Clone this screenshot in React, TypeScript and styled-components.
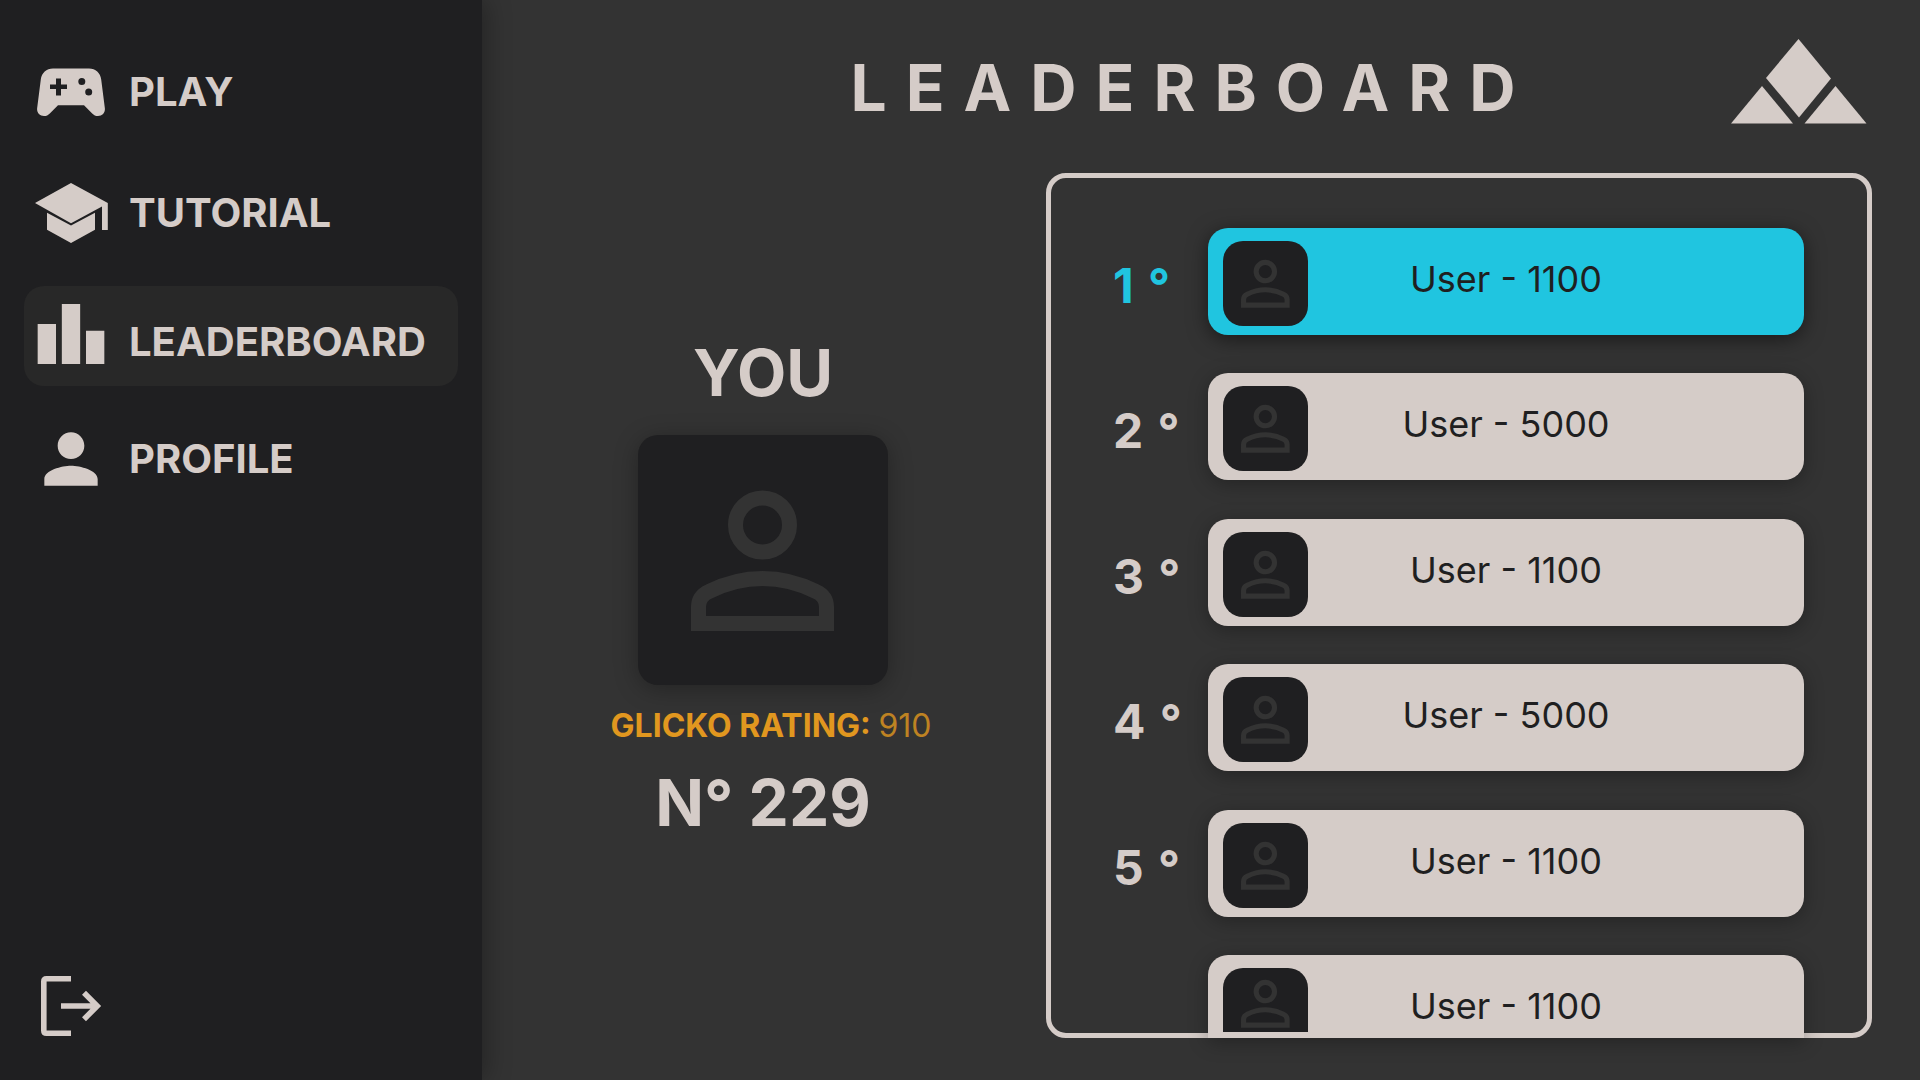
import React from "react";
import styled, { createGlobalStyle, css } from "styled-components";
import { MdLeaderboard, MdPerson } from "react-icons/md";

const color = {
  page: "#333333",
  ink: "#1f1f21",
  active: "#282828",
  sand: "#d5ccc8",
  cyan: "#20c5e0",
  amber: "#e1971f",
};

const GlobalStyle = createGlobalStyle`
  *, *::before, *::after { box-sizing: border-box; }
  body {
    margin: 0;
    background: ${color.page};
    color: ${color.sand};
    font-family: Inter, "Liberation Sans", sans-serif;
  }
  h1, h2, p, ol, ul { margin: 0; padding: 0; }
  ol, ul { list-style: none; }
`;

const Page = styled.div`
  display: grid;
  grid-template-columns: 482px minmax(0, 1fr);
  min-height: 100vh;
`;

const Sidebar = styled.aside`
  display: flex;
  flex-direction: column;
  justify-content: space-between;
  padding: 44px 24px 34px;
  background: ${color.ink};
  box-shadow: 4px 0 24px rgba(0, 0, 0, 0.3);
`;

const NavList = styled.ul`
  display: flex;
  flex-direction: column;
  gap: 25px;
`;

const NavLink = styled.a<{ $active?: boolean }>`
  display: flex;
  align-items: center;
  gap: 18px;
  height: 96px;
  padding: 0 7px;
  border-radius: 20px;
  color: ${color.sand};
  font-size: 40px;
  font-weight: 700;
  line-height: 64px;
  text-decoration: none;

  svg {
    flex: none;
    width: 80px;
    height: 80px;
  }

  ${(p) =>
    p.$active &&
    css`
      align-items: flex-end;
      height: 100px;
      padding-bottom: 12px;
      background: ${color.active};
    `}
`;

const LogoutButton = styled.button`
  align-self: flex-start;
  display: block;
  padding: 0 7px;
  border: 0;
  background: none;
  color: ${color.sand};
  cursor: pointer;

  svg {
    display: block;
    width: 80px;
    height: 80px;
  }
`;

const Main = styled.main`
  display: flex;
  flex-direction: column;
  padding-bottom: 42px;
`;

const Header = styled.header`
  display: grid;
  grid-template-columns: 1fr auto 1fr;
  align-items: end;
  padding: 39px 53px 49px 36px;
`;

const Title = styled.h1`
  grid-column: 2;
  font-size: 64px;
  font-weight: 700;
  line-height: 72px;
  letter-spacing: 19px;
`;

const Logo = styled.svg`
  justify-self: end;
  width: 136px;
  height: 85px;
  fill: ${color.sand};
`;

const Content = styled.div`
  flex: 1;
  display: grid;
  grid-template-columns: minmax(0, 564fr) minmax(0, 826fr);
  padding-right: 48px;
`;

const You = styled.section`
  display: flex;
  flex-direction: column;
  align-items: center;
  justify-content: center;
  gap: 20px;
  padding: 0 2px 36px 0;
`;

const BigText = styled.h2`
  font-size: 64px;
  font-weight: 700;
  line-height: 72px;
`;

const Portrait = styled.div`
  width: 250px;
  height: 250px;
  margin-top: 6px;
  border-radius: 20px;
  background: ${color.ink};
  box-shadow: 0 4px 24px rgba(0, 0, 0, 0.3);
`;

const Silhouette = styled.svg`
  display: block;
  width: 100%;
  aspect-ratio: 1;
  fill: none;
  stroke: ${color.page};
  stroke-width: 15;
`;

const Rating = styled.p`
  padding-left: 16px;
  color: ${color.amber};
  font-size: 32px;
  font-weight: 700;
  line-height: 42px;
  white-space: nowrap;
`;

const RatingValue = styled.span`
  font-weight: 400;
  opacity: 0.8;
`;

const Board = styled.section`
  display: flex;
  padding: 50px 63px 0 62px;
  border: 5px solid ${color.sand};
  border-radius: 20px;
`;

const Ranking = styled.ol`
  flex: 1;
  display: flex;
  flex-direction: column;
  justify-content: space-between;
  margin-bottom: -5px;
`;

const Entry = styled.li<{ $cut?: boolean }>`
  display: grid;
  grid-template-columns: 95px minmax(0, 1fr);
  height: ${(p) => (p.$cut ? "83px" : "107px")};
`;

const Rank = styled.div<{ $first?: boolean }>`
  display: flex;
  gap: 3px;
  padding-top: 8px;
  color: ${(p) => (p.$first ? color.cyan : color.sand)};
  font-size: 48px;
  font-weight: 700;
  line-height: 99px;
  white-space: pre;
`;

const Bar = styled.div<{ $first?: boolean; $cut?: boolean }>`
  grid-column: 2;
  min-height: 0;
  padding: 13px 15px 6px;
  border-radius: ${(p) => (p.$cut ? "20px 20px 0 0" : "20px")};
  background: ${(p) => (p.$first ? color.cyan : color.sand)};
  box-shadow: 0 4px 20px rgba(0, 0, 0, ${(p) => (p.$first ? 0.5 : 0.3)});
`;

const BarContent = styled.div`
  display: grid;
  grid-template-columns: 85px 1fr 85px;
  align-items: start;
  height: 100%;
  overflow: hidden;
`;

const Avatar = styled.div<{ $cut?: boolean }>`
  display: flex;
  align-items: center;
  height: 85px;
  padding-bottom: ${(p) => (p.$cut ? "13px" : "0")};
  border-radius: 20px;
  background: ${color.ink};
`;

const Player = styled.span`
  color: ${color.ink};
  font-size: 36px;
  font-weight: 400;
  line-height: 76px;
  text-align: center;
  white-space: nowrap;
`;

const PersonOutline = () => (
  <Silhouette viewBox="0 0 250 250" aria-hidden="true">
    <circle cx="124.5" cy="90" r="27" />
    <path d="M60.5 188.5V172C60.5 165 64.5 159.5 71 156.500Q97 143.500 124.500 143.500T178 156.500C184.500 159.500 188.500 165 188.500 172V188.500Z" />
  </Silhouette>
);

const GamepadIcon = () => (
  <svg viewBox="0 0 80 80" fill="currentColor" aria-hidden="true">
    <path
      fillRule="evenodd"
      d="M22 16.500H58C64.500 16.500 69.500 21 70.200 27.500L73.900 56.500C74.300 61 71 64 67 64C64.600 64 62.800 63 61.200 61.400L53 53.200H27L18.800 61.400C17.200 63 15.400 64 13 64C9 64 5.700 61 6.100 56.500L9.800 27.500C10.500 21 15.500 16.500 22 16.500ZM25 26.500V32.500H19V37H25V43.500H30V37H36V32.500H30V26.500ZM50.800 26A3.500 3.500 0 1 0 50.800 33A3.500 3.500 0 1 0 50.800 26ZM57.700 36.500A3.500 3.500 0 1 0 57.700 43.500A3.500 3.500 0 1 0 57.700 36.500Z"
    />
  </svg>
);

const SchoolIcon = () => (
  <svg viewBox="0 0 80 80" fill="currentColor" aria-hidden="true">
    <path d="M40 10L76.800 30V57H71V33.500L40 50.300L4 30Z" />
    <path d="M16 39.800L40 52.500L64 39.800V56.800L40 70L16 56.800Z" />
  </svg>
);

const LogoutIcon = () => (
  <svg viewBox="0 0 80 80" fill="none" stroke="currentColor" strokeWidth="5.6" aria-hidden="true">
    <path d="M40 12.800H15.500Q12.800 12.800 12.800 15.500V64.500Q12.800 67.200 15.500 67.200H40" />
    <path d="M30 40H65M53 26.800L66.200 40L53 53.200" />
  </svg>
);

const navItems = [
  { label: "PLAY", icon: <GamepadIcon /> },
  { label: "TUTORIAL", icon: <SchoolIcon /> },
  { label: "LEADERBOARD", icon: <MdLeaderboard aria-hidden="true" />, active: true },
  { label: "PROFILE", icon: <MdPerson aria-hidden="true" /> },
];

const players = [1100, 5000, 1100, 5000, 1100, 1100];

export default function App() {
  return (
    <>
      <GlobalStyle />
      <Page>
        <Sidebar>
          <nav aria-label="Main">
            <NavList>
              {navItems.map((item) => (
                <li key={item.label}>
                  <NavLink
                    href={`#${item.label.toLowerCase()}`}
                    $active={item.active}
                    aria-current={item.active ? "page" : undefined}
                  >
                    {item.icon}
                    {item.label}
                  </NavLink>
                </li>
              ))}
            </NavList>
          </nav>
          <LogoutButton type="button" aria-label="Log out">
            <LogoutIcon />
          </LogoutButton>
        </Sidebar>

        <Main>
          <Header>
            <Title>LEADERBOARD</Title>
            <Logo viewBox="0 0 136 85" aria-hidden="true">
              <path d="M67.500 0L100 39.500L68 78.500L35 39Z" />
              <path d="M31 47L62 84.500H0Z" />
              <path d="M104.500 47L135.500 84.500H73.500Z" />
            </Logo>
          </Header>

          <Content>
            <You>
              <BigText>YOU</BigText>
              <Portrait>
                <PersonOutline />
              </Portrait>
              <Rating>
                GLICKO RATING: <RatingValue>910</RatingValue>
              </Rating>
              <BigText as="p">N° 229</BigText>
            </You>

            <Board aria-label="Ranking">
              <Ranking>
                {players.map((score, i) => {
                  const first = i === 0;
                  const cut = i === players.length - 1;
                  return (
                    <Entry key={i} $cut={cut}>
                      {!cut && (
                        <Rank $first={first}>
                          <span>{i + 1}</span>
                          <span>{" °"}</span>
                        </Rank>
                      )}
                      <Bar $first={first} $cut={cut}>
                        <BarContent>
                          <Avatar $cut={cut}>
                            <PersonOutline />
                          </Avatar>
                          <Player>User - {score}</Player>
                        </BarContent>
                      </Bar>
                    </Entry>
                  );
                })}
              </Ranking>
            </Board>
          </Content>
        </Main>
      </Page>
    </>
  );
}
